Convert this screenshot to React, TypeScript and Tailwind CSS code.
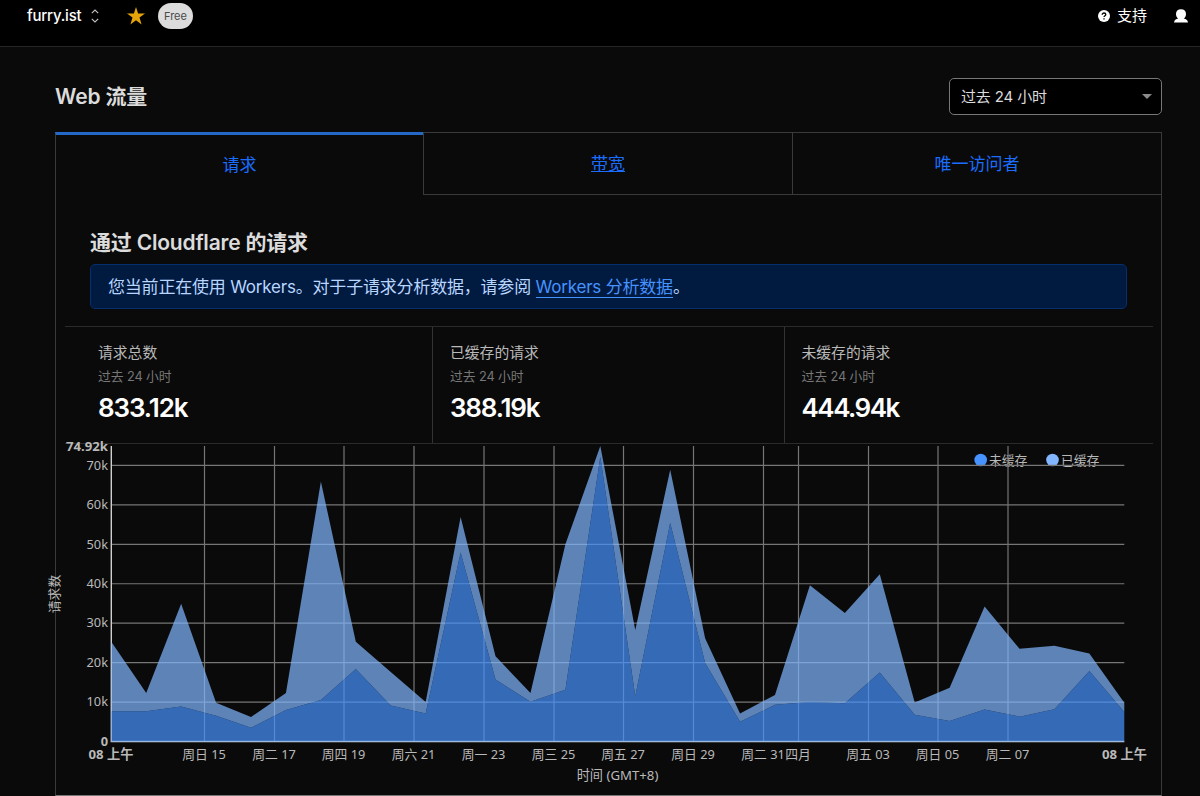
import type { ReactNode } from 'react';
import { clsx } from 'clsx';

const TABS = ['请求', '带宽', '唯一访问者'];

const STATS = [
  { label: '请求总数', value: '833.12k', className: 'w-[367px] pl-[33px] tracking-[-1.1px]' },
  { label: '已缓存的请求', value: '388.19k', className: 'w-[352px] border-l pl-[17px] tracking-[-1.2px]' },
  { label: '未缓存的请求', value: '444.94k', className: 'w-[369px] border-l pl-[16.5px] tracking-[-1.5px]' },
];

// thousands of requests per sample
const TOTAL = [
  25.3, 12.3, 34.9, 9.8, 6.2, 12.3, 65.9, 25.3, 17.6, 10, 56.9, 21.6, 12.3, 50, 74.92, 28.3, 68.9, 26.2, 7.1, 11.8,
  39.6, 32.6, 42.4, 9.9, 13.6, 34.2, 23.5, 24.3, 22.3, 9.8,
];
const UNCACHED = [
  7.7, 7.7, 8.9, 6.5, 3.5, 8, 10.5, 18.4, 9.1, 7.1, 47.9, 15.7, 10.1, 13.1, 72.2, 11.5, 55.4, 19.9, 5, 9.3, 10, 9.7,
  17.5, 6.8, 5.2, 8.1, 6.3, 8.2, 17.9, 7.5,
];

const X_TICKS = [
  { x: 148.5, label: '周日 15' },
  { x: 218.5, label: '周二 17' },
  { x: 288, label: '周四 19' },
  { x: 358, label: '周六 21' },
  { x: 428, label: '周一 23' },
  { x: 498, label: '周三 25' },
  { x: 567.5, label: '周五 27' },
  { x: 637.5, label: '周日 29' },
  { x: 707.5, label: '周二 31' },
  { x: 742.5, label: '四月' },
  { x: 812.5, label: '周五 03' },
  { x: 882, label: '周日 05' },
  { x: 952, label: '周二 07' },
];

const LEFT = 55.3;
const RIGHT = 1068.3;
const TOP = 2;
const BOTTOM = 297.5;
const MAX = 74.92;

const getX = (i: number) => LEFT + ((RIGHT - LEFT) * i) / (TOTAL.length - 1);
const getY = (v: number) => BOTTOM - ((BOTTOM - TOP) * v) / MAX;
const toPoints = (values: number[]) => values.map((v, i) => `${getX(i).toFixed(2)},${getY(v).toFixed(2)}`);

function TrafficChart() {
  const total = toPoints(TOTAL);
  const uncached = toPoints(UNCACHED);

  return (
    <svg
      viewBox="0 0 1105 351"
      className="block h-[351px] w-[1105px] overflow-visible font-['Noto_Sans','Noto_Sans_CJK_SC',sans-serif] text-[12.8px]"
      fill="#b9b9b9"
    >
      <circle cx="924.7" cy="16" r="6.3" fill="#4693ff" />
      <text x="933" y="20.5">未缓存</text>
      <circle cx="996.5" cy="16" r="6.3" fill="#82b6ff" />
      <text x="1005" y="20.5">已缓存</text>

      <g stroke="#767676" strokeWidth="1.2">
        {[10, 20, 30, 40, 50, 60, 70].map((v) => (
          <line key={v} x1={LEFT} x2={RIGHT} y1={getY(v)} y2={getY(v)} />
        ))}
        {X_TICKS.map(({ x }) => (
          <line key={x} x1={x} x2={x} y1={TOP} y2={BOTTOM} />
        ))}
      </g>
      <path d={`M${LEFT} ${TOP}V${BOTTOM}H${RIGHT}`} fill="none" stroke="#cfcfcf" strokeWidth="1.4" />

      <polygon points={[...total, ...uncached.slice().reverse()].join(' ')} fill="#82b6ff" fillOpacity="0.7" />
      <polygon
        points={[...uncached, `${RIGHT},${BOTTOM}`, `${LEFT},${BOTTOM}`].join(' ')}
        fill="#4693ff"
        fillOpacity="0.7"
      />

      <g textAnchor="end">
        <text x="52" y="6.5" className="text-[13.2px] font-bold">74.92k</text>
        {[10, 20, 30, 40, 50, 60, 70].map((v) => (
          <text key={v} x="52" y={getY(v) + 4.3}>{v}k</text>
        ))}
        <text x="52" y="301.5" className="font-bold">0</text>
      </g>

      <g textAnchor="middle">
        <text x="55" y="314.5" className="text-[13.2px] font-bold">08 上午</text>
        {X_TICKS.map(({ x, label }) => (
          <text key={x} x={x - 0.5} y="314.5">{label}</text>
        ))}
        <text x="1068.5" y="314.5" className="text-[13.2px] font-bold">08 上午</text>
        <text x="561.5" y="336" className="text-[13.2px]">时间 (GMT+8)</text>
        <text transform="translate(2.5 150) rotate(-90)">请求数</text>
      </g>
    </svg>
  );
}

function TopBar() {
  return (
    <header className="flex h-[47px] items-start border-b border-[#262626] bg-black pl-[27px] pr-[12px] text-white">
      <div className="flex h-[31px] items-center">
        <span className="pt-px text-[15px] font-medium tracking-[-0.2px]">furry.ist</span>
        <svg viewBox="0 0 8 14" className="ml-[10px] h-[14px] w-2" fill="none" stroke="#c4c4c4" strokeWidth="1.1">
          <path d="M.8 4.2 4 1l3.2 3.2M.8 9.8 4 13l3.2-3.2" />
        </svg>
        <svg viewBox="0 0 18 18" className="ml-[28px] h-[18px] w-[18px]" fill="#e5a50a">
          <path d="m9 0 2.1 6.4H18l-5.500 4.100 2.100 6.900L9 13.300l-5.600 4.100 2.100-6.900L0 6.400h6.900z" />
        </svg>
        <span className="ml-[12.5px] flex h-[26px] w-[35px] items-center justify-center rounded-full bg-[#dcdcdc] pt-px text-[11px] text-[#4a4a4a]">
          Free
        </span>
      </div>
      <div className="ml-auto flex h-[31px] items-center">
        <svg viewBox="0 0 12 12" className="h-3 w-3">
          <circle cx="6" cy="6" r="6" fill="#fff" />
          <path d="M4.2 4.7c0-2.3 3.6-2.2 3.6-.1C7.8 5.8 6 5.8 6 7.1M6 8.2v1.3" fill="none" stroke="#000" strokeWidth="1.3" />
        </svg>
        <span className="ml-[7px] pt-[2px] text-[15px]">支持</span>
        <svg viewBox="0 0 14 14" className="ml-[27px] h-[14px] w-[14px]" fill="#fff">
          <path d="M7 .2c3.2 0 5 2 5 4.800 0 2-.9 3.600-2.200 4.500 2.300.5 3.800 1.400 4.200 3.900H0c.4-2.500 1.900-3.400 4.200-3.900C2.900 8.600 2 7 2 5 2 2.200 3.800.2 7 .2z" />
        </svg>
      </div>
    </header>
  );
}

interface HeadingProps {
  children: ReactNode;
}

function Heading({ children }: HeadingProps) {
  return (
    <h2 className="text-[21px] font-semibold leading-[30px] tracking-[-0.2px] text-[#dcdcdc]">{children}</h2>
  );
}

export default function App() {
  return (
    <div className="h-[796px] w-[1200px] overflow-hidden bg-[#0a0a0a] font-['Inter','Noto_Sans_CJK_SC',sans-serif]">
      <TopBar />

      <main className="ml-[55px] w-[1107px]">
        <div className="flex h-[85px] items-center justify-between pt-[14px]">
          <Heading>Web 流量</Heading>
          <button className="flex h-[37px] w-[213px] items-center justify-between rounded-[5px] border border-[#777] bg-black pl-[11px] pr-[9px] text-[15px] tracking-[-0.15px] text-[#dcdcdc]">
            <span className="pt-[2px]">过去 24 小时</span>
            <svg viewBox="0 0 10 5" className="h-[5px] w-[10px]" fill="#8b8b8b">
              <path d="M0 0h10L5 5z" />
            </svg>
          </button>
        </div>

        <section className="h-[664px] border-x border-b border-[#3a3a3a] border-b-[#777]">
          <nav className="-mx-px flex h-[63px] text-[17px] text-[#1b6dff]">
            {TABS.map((tab, i) => (
              <a
                key={tab}
                className={clsx(
                  'flex items-center justify-center pt-[2px]',
                  i === 0 && 'w-[368px] border-l border-t-[3px] border-l-[#3a3a3a] border-t-[#2468c8]',
                  i > 0 && 'border-y border-l border-[#3a3a3a]',
                  i === 1 && 'w-[369px] underline',
                  i === 2 && 'w-[370px] border-r',
                )}
              >
                {tab}
              </a>
            ))}
          </nav>

          <div className="px-[34px] pt-[33px]">
            <Heading>通过 Cloudflare 的请求</Heading>
            <p className="mt-[6px] flex h-[45px] items-center rounded-[5px] border border-[#062f6e] bg-[#001a40] pl-[17px] text-[17px] tracking-[-0.2px] text-[#b9d6ff]">
              <span className="pt-[2px]">
                您当前正在使用 Workers。对于子请求分析数据，请参阅{' '}
                <a className="border-b border-[#4693ff] text-[#4693ff]">Workers 分析数据</a>。
              </span>
            </p>
          </div>

          <dl className="ml-[9px] mt-[17px] flex h-[118px] w-[1088px] border-y border-[#2b2b2b]">
            {STATS.map(({ label, value, className }) => (
              <div key={label} className={clsx('shrink-0 border-[#333] pt-[15px]', className)}>
                <dt className="text-[14.8px] leading-[23px] tracking-normal text-[#b9b9b9]">{label}</dt>
                <dd className="text-[12.8px] leading-[24px] tracking-[-0.1px] text-[#777]">过去 24 小时</dd>
                <dd className="text-[26px] font-semibold leading-[37px] text-white">{value}</dd>
              </div>
            ))}
          </dl>

          <TrafficChart />
        </section>
      </main>
    </div>
  );
}
